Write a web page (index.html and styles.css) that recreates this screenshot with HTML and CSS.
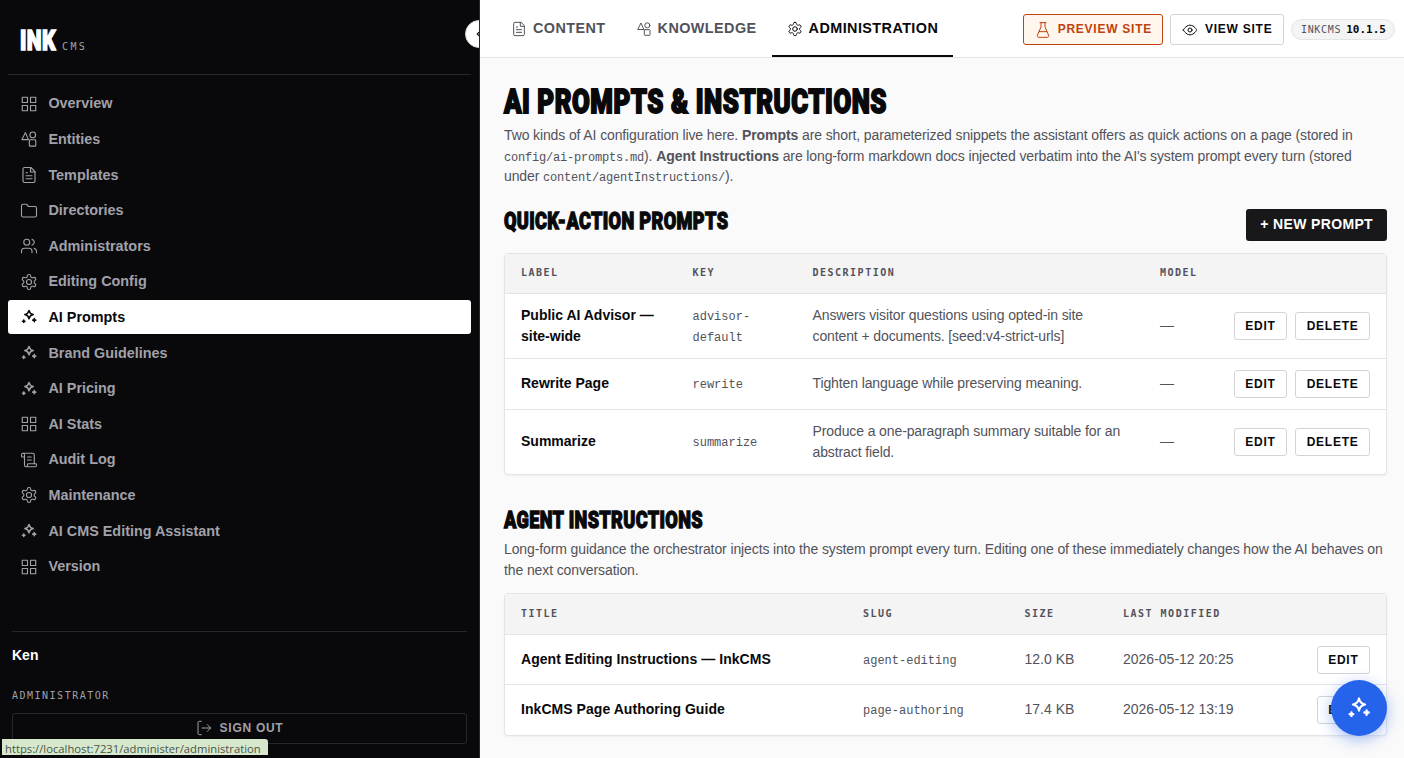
FILE: index.html
```
<!DOCTYPE html>
<html lang="en">

<head>
    <meta charset="utf-8">
    <meta name="viewport" content="width=device-width, initial-scale=1">
    <title>AI Prompts - InkCMS</title>
    <link rel="stylesheet" href="styles.css">
</head>

<body>
    <!-- icon sprite -->
    <svg class="sprite" aria-hidden="true">
        <symbol id="i-grid" viewBox="0 0 24 24"><rect x="3" y="3" width="7" height="7"/><rect x="14" y="3" width="7" height="7"/><rect x="14" y="14" width="7" height="7"/><rect x="3" y="14" width="7" height="7"/></symbol>
        <symbol id="i-shapes" viewBox="0 0 24 24"><path d="M7.2 3.5 2.6 12.8h8.6z"/><circle cx="17" cy="6.5" r="3.8"/><rect x="12.5" y="13" width="8.5" height="8.5" rx="1"/></symbol>
        <symbol id="i-file" viewBox="0 0 24 24"><path d="M14.5 2H6a2 2 0 0 0-2 2v16a2 2 0 0 0 2 2h12a2 2 0 0 0 2-2V7.5z"/><path d="M14 2v6h6M16 13H8M16 17H8M10 9H8"/></symbol>
        <symbol id="i-folder" viewBox="0 0 24 24"><path d="M4 20h16a2 2 0 0 0 2-2V8a2 2 0 0 0-2-2h-7.9a2 2 0 0 1-1.7-.9l-.8-1.2A2 2 0 0 0 7.9 3H4a2 2 0 0 0-2 2v13a2 2 0 0 0 2 2z"/></symbol>
        <symbol id="i-users" viewBox="0 0 24 24"><path d="M16 21v-2a4 4 0 0 0-4-4H6a4 4 0 0 0-4 4v2"/><circle cx="9" cy="7" r="4"/><path d="M22 21v-2a4 4 0 0 0-3-3.87M16 3.13a4 4 0 0 1 0 7.75"/></symbol>
        <symbol id="i-gear" viewBox="0 0 24 24"><path d="M12.22 2h-.44a2 2 0 0 0-2 2v.18a2 2 0 0 1-1 1.73l-.43.25a2 2 0 0 1-2 0l-.15-.08a2 2 0 0 0-2.73.73l-.22.38a2 2 0 0 0 .73 2.73l.15.1a2 2 0 0 1 1 1.72v.51a2 2 0 0 1-1 1.74l-.15.09a2 2 0 0 0-.73 2.73l.22.38a2 2 0 0 0 2.73.73l.15-.08a2 2 0 0 1 2 0l.43.25a2 2 0 0 1 1 1.73V20a2 2 0 0 0 2 2h.44a2 2 0 0 0 2-2v-.18a2 2 0 0 1 1-1.73l.43-.25a2 2 0 0 1 2 0l.15.08a2 2 0 0 0 2.73-.73l.22-.39a2 2 0 0 0-.73-2.73l-.15-.08a2 2 0 0 1-1-1.74v-.5a2 2 0 0 1 1-1.74l.15-.09a2 2 0 0 0 .73-2.73l-.22-.38a2 2 0 0 0-2.73-.73l-.15.08a2 2 0 0 1-2 0l-.43-.25a2 2 0 0 1-1-1.73V4a2 2 0 0 0-2-2z"/><circle cx="12" cy="12" r="3.4"/></symbol>
        <symbol id="i-sparkles" viewBox="0 0 24 24"><path stroke-width="2" d="M12 3.2q.9 4.7 5.6 5.6-4.7.9-5.6 5.6-.9-4.7-5.6-5.6 4.7-.9 5.6-5.6z"/><path stroke-width="2.2" d="M5 16.1v3.2M3.4 17.7h3.2M19 14.2v4M17 16.2h4"/></symbol>
        <symbol id="i-scroll" viewBox="0 0 24 24"><path d="M15 12h-5M15 8h-5M19 17V5a2 2 0 0 0-2-2H4"/><path d="M8 21h12a2 2 0 0 0 2-2v-1a1 1 0 0 0-1-1H11a1 1 0 0 0-1 1v1a2 2 0 1 1-4 0V5a2 2 0 1 0-4 0v2a1 1 0 0 0 1 1h3"/></symbol>
        <symbol id="i-logout" viewBox="0 0 24 24"><path d="M8 22H5a2 2 0 0 1-2-2V4a2 2 0 0 1 2-2h3M17 17l5-5-5-5M22 12H9"/></symbol>
        <symbol id="i-flask" viewBox="0 0 24 24"><path d="M7.5 1h9M9 1v6.5L3.6 19.8A2.2 2.2 0 0 0 5.6 23h12.8a2.2 2.2 0 0 0 2-3.2L15 7.5V1M6.5 14.5h11"/></symbol>
        <symbol id="i-eye" viewBox="0 0 24 24"><path d="M2 12s3.5-7.2 10-7.2S22 12 22 12s-3.5 7.2-10 7.2S2 12 2 12z"/><circle cx="12" cy="12" r="3"/></symbol>
        <symbol id="i-chevron" viewBox="0 0 24 24"><path d="m15 18-6-6 6-6"/></symbol>
    </svg>

    <div class="app">
        <aside class="sidebar">
            <div class="brand">
                <span class="brand-name"><span class="display">INK</span></span>
                <span class="brand-sub">CMS</span>
            </div>
            <nav class="side-nav">
                <a class="side-link"><svg class="icon"><use href="#i-grid"/></svg>Overview</a>
                <a class="side-link"><svg class="icon"><use href="#i-shapes"/></svg>Entities</a>
                <a class="side-link"><svg class="icon"><use href="#i-file"/></svg>Templates</a>
                <a class="side-link"><svg class="icon"><use href="#i-folder"/></svg>Directories</a>
                <a class="side-link"><svg class="icon"><use href="#i-users"/></svg>Administrators</a>
                <a class="side-link"><svg class="icon"><use href="#i-gear"/></svg>Editing Config</a>
                <a class="side-link active" aria-current="page"><svg class="icon"><use href="#i-sparkles"/></svg>AI Prompts</a>
                <a class="side-link"><svg class="icon"><use href="#i-sparkles"/></svg>Brand Guidelines</a>
                <a class="side-link"><svg class="icon"><use href="#i-sparkles"/></svg>AI Pricing</a>
                <a class="side-link"><svg class="icon"><use href="#i-grid"/></svg>AI Stats</a>
                <a class="side-link"><svg class="icon"><use href="#i-scroll"/></svg>Audit Log</a>
                <a class="side-link"><svg class="icon"><use href="#i-gear"/></svg>Maintenance</a>
                <a class="side-link"><svg class="icon"><use href="#i-sparkles"/></svg>AI CMS Editing Assistant</a>
                <a class="side-link"><svg class="icon"><use href="#i-grid"/></svg>Version</a>
            </nav>
            <div class="account">
                <div class="account-name">Ken</div>
                <div class="account-role">Administrator</div>
                <button class="sign-out"><svg class="icon"><use href="#i-logout"/></svg>Sign out</button>
            </div>
            <button class="collapse" aria-label="Collapse sidebar"><svg class="icon"><use href="#i-chevron"/></svg></button>
        </aside>

        <div class="page">
            <header class="topbar">
                <nav class="tabs">
                    <a class="tab"><svg class="icon"><use href="#i-file"/></svg>Content</a>
                    <a class="tab"><svg class="icon"><use href="#i-shapes"/></svg>Knowledge</a>
                    <a class="tab active"><svg class="icon"><use href="#i-gear"/></svg>Administration</a>
                </nav>
                <div class="site-actions">
                    <a class="site-btn preview"><svg class="icon"><use href="#i-flask"/></svg>Preview site</a>
                    <a class="site-btn"><svg class="icon"><use href="#i-eye"/></svg>View site</a>
                    <span class="version">InkCMS <b>10.1.5</b></span>
                </div>
            </header>

            <main class="content">
                <h1><span class="display">AI Prompts &amp; Instructions</span></h1>
                <p class="lead">Two kinds of AI configuration live here. <strong>Prompts</strong> are short, parameterized snippets the assistant offers as quick actions on a page (stored in <code>config/ai-prompts.md</code>). <strong>Agent Instructions</strong> are long-form markdown docs injected verbatim into the AI's system prompt every turn (stored under <code>content/agentInstructions/</code>).</p>

                <div class="section-head">
                    <h2><span class="display">Quick-action prompts</span></h2>
                    <button class="btn-primary">+ New prompt</button>
                </div>
                <table class="prompts">
                    <colgroup><col class="c-label"><col class="c-key"><col class="c-desc"><col class="c-model"><col></colgroup>
                    <thead>
                        <tr><th>Label</th><th>Key</th><th>Description</th><th>Model</th><th></th></tr>
                    </thead>
                    <tbody>
                        <tr>
                            <td class="name">Public AI Advisor — site-wide</td>
                            <td><code>advisor-default</code></td>
                            <td class="desc">Answers visitor questions using opted-in site content + documents. [seed:v4-strict-urls]</td>
                            <td>—</td>
                            <td><div class="actions"><button class="btn">Edit</button><button class="btn">Delete</button></div></td>
                        </tr>
                        <tr>
                            <td class="name">Rewrite Page</td>
                            <td><code>rewrite</code></td>
                            <td class="desc">Tighten language while preserving meaning.</td>
                            <td>—</td>
                            <td><div class="actions"><button class="btn">Edit</button><button class="btn">Delete</button></div></td>
                        </tr>
                        <tr>
                            <td class="name">Summarize</td>
                            <td><code>summarize</code></td>
                            <td class="desc">Produce a one-paragraph summary suitable for an abstract field.</td>
                            <td>—</td>
                            <td><div class="actions"><button class="btn">Edit</button><button class="btn">Delete</button></div></td>
                        </tr>
                    </tbody>
                </table>

                <h2 class="agent-title"><span class="display">Agent instructions</span></h2>
                <p class="intro">Long-form guidance the orchestrator injects into the system prompt every turn. Editing one of these immediately changes how the AI behaves on the next conversation.</p>
                <table class="agents">
                    <colgroup><col class="c-title"><col class="c-slug"><col class="c-size"><col class="c-date"><col></colgroup>
                    <thead>
                        <tr><th>Title</th><th>Slug</th><th>Size</th><th>Last modified</th><th></th></tr>
                    </thead>
                    <tbody>
                        <tr>
                            <td class="name">Agent Editing Instructions — InkCMS</td>
                            <td><code>agent-editing</code></td>
                            <td>12.0 KB</td>
                            <td>2026-05-12 20:25</td>
                            <td><div class="actions"><button class="btn">Edit</button></div></td>
                        </tr>
                        <tr>
                            <td class="name">InkCMS Page Authoring Guide</td>
                            <td><code>page-authoring</code></td>
                            <td>17.4 KB</td>
                            <td>2026-05-12 13:19</td>
                            <td><div class="actions"><button class="btn">Edit</button></div></td>
                        </tr>
                    </tbody>
                </table>
            </main>
        </div>
    </div>

    <button class="fab" aria-label="Open AI assistant"><svg class="icon"><use href="#i-sparkles"/></svg></button>
    <div class="link-status">https://localhost:7231/administer/administration</div>
</body>

</html>
```
FILE: styles.css
```
:root {
    --ink: #09090b;
    --text: #52525b;
    --muted: #a1a1aa;
    --line: #e4e4e7;
    --line-strong: #d4d4d8;
    --line-dark: #27272a;
    --surface: #fafafa;
    --accent: #2563eb;
    --preview: #c2410c;
    --sans: "Liberation Sans", Arial, sans-serif;
    --mono: "Liberation Mono", Consolas, monospace;
    --mono-caps: "DejaVu Sans Mono", Consolas, monospace;
}

* {
    box-sizing: border-box;
    margin: 0;
    padding: 0;
}

body {
    height: 100vh;
    overflow: hidden;
    background: var(--surface);
    color: var(--text);
    font: 14px/21px var(--sans);
}

button {
    font-family: inherit;
    cursor: pointer;
}

.sprite {
    display: none;
}

.icon {
    width: 16px;
    height: 16px;
    flex: none;
    fill: none;
    stroke: currentColor;
    stroke-width: 1.5;
    stroke-linecap: round;
    stroke-linejoin: round;
}

.app {
    display: flex;
    height: 100vh;
}

/* heavy condensed face for the logo and headings */
.display {
    display: inline-block;
    font-family: Impact, Roboto, sans-serif;
    font-weight: 900;
    letter-spacing: 0.02em;
    text-transform: uppercase;
    white-space: nowrap;
    transform-origin: 0 50%;
    transform: scaleX(0.755);
    -webkit-text-stroke: 0.055em currentColor;
}

/* sidebar */
.sidebar {
    position: relative;
    display: flex;
    flex-direction: column;
    flex: none;
    width: 480px;
    padding: 0 8px;
    overflow: hidden;
    background: var(--ink);
    border-right: 1px solid var(--line-dark);
}

.brand {
    display: flex;
    align-items: baseline;
    height: 75px;
    padding: 24px 12px 0;
    border-bottom: 1px solid var(--line-dark);
}

.brand-name {
    width: 42px;
    color: #fff;
    font-size: 28px;
    line-height: 34px;
}

.brand-sub {
    color: var(--muted);
    font: 10px var(--mono-caps);
    letter-spacing: 2.4px;
}

.side-nav {
    display: flex;
    flex-direction: column;
    gap: 1.6px;
    padding-top: 11.9px;
}

.side-link {
    display: flex;
    align-items: center;
    gap: 10.4px;
    height: 34px;
    padding: 0 12px;
    border-radius: 3px;
    color: var(--muted);
    font-size: 14.4px;
    font-weight: 600;
}

.side-link .icon {
    width: 18px;
    height: 18px;
}

.side-link.active {
    background: #fff;
    color: var(--ink);
}

.account {
    margin: auto 4px 14px;
    padding-top: 13px;
    border-top: 1px solid var(--line-dark);
}

.account-name {
    color: #fff;
    font-weight: 700;
}

.account-role {
    margin: 22px 0 10px;
    color: var(--muted);
    font: 10px/15px var(--mono-caps);
    letter-spacing: 1.5px;
    text-transform: uppercase;
}

.sign-out {
    display: flex;
    align-items: center;
    justify-content: center;
    gap: 8px;
    width: 100%;
    height: 31px;
    padding-bottom: 1px;
    background: none;
    border: 1px solid var(--line-dark);
    border-radius: 3px;
    color: var(--muted);
    font-size: 12px;
    font-weight: 600;
    letter-spacing: 0.72px;
    text-transform: uppercase;
}

.collapse {
    position: absolute;
    top: 20px;
    right: -14px;
    display: grid;
    place-items: center;
    width: 28px;
    height: 28px;
    background: #fff;
    border: 1px solid var(--line-strong);
    border-radius: 50%;
    color: var(--ink);
}

.collapse .icon {
    width: 14px;
    height: 14px;
    stroke-width: 2;
}

/* top bar */
.page {
    flex: 1;
    min-width: 0;
}

.topbar {
    display: flex;
    justify-content: space-between;
    height: 58px;
    padding: 0 9px 0 16px;
    background: #fff;
    border-bottom: 1px solid var(--line);
}

.tabs {
    display: flex;
}

.tab {
    display: flex;
    align-items: center;
    gap: 6px;
    height: 57px;
    padding: 2px 15px 0;
    border-bottom: 2px solid transparent;
    font-size: 14.4px;
    font-weight: 600;
    letter-spacing: 0.43px;
    text-transform: uppercase;
}

.tab.active {
    border-color: var(--ink);
    color: var(--ink);
}

.site-actions {
    display: flex;
    align-items: center;
    gap: 7px;
    padding-top: 2px;
}

.site-btn {
    display: flex;
    align-items: center;
    gap: 7px;
    height: 31px;
    padding: 0 10.5px;
    border: 1px solid var(--line-strong);
    border-radius: 3px;
    color: var(--ink);
    font-size: 12px;
    font-weight: 600;
    letter-spacing: 0.75px;
    text-transform: uppercase;
}

.site-btn.preview {
    background: #fff7ed;
    border-color: var(--preview);
    color: var(--preview);
}

.version {
    display: flex;
    gap: 5px;
    height: 21px;
    padding: 0 8px 0 9px;
    background: #f4f4f5;
    border: 1px solid var(--line);
    border-radius: 11px;
    font: 10px/19px var(--mono-caps);
    letter-spacing: 0.7px;
    text-transform: uppercase;
}

.version b {
    color: var(--ink);
    font-size: 11px;
    letter-spacing: 0;
}

/* page content */
.content {
    padding: 26px 17px 0 24px;
}

h1,
h2 {
    color: var(--ink);
}

h1 {
    height: 36px;
    font-size: 33.5px;
    line-height: 36px;
}

h1 .display {
    transform: scaleX(0.77);
}

h2 {
    height: 24px;
    font-size: 24px;
    line-height: 24px;
}

.lead {
    margin-top: 5px;
    line-height: 20.6px;
    letter-spacing: -0.12px;
}

.lead strong {
    letter-spacing: -0.05px;
}

code {
    font: 12px/1 var(--mono);
}

.lead code {
    letter-spacing: -0.2px;
}

.section-head {
    display: flex;
    justify-content: space-between;
    margin: 22px 0 12px;
}

.btn-primary {
    height: 32px;
    padding: 0 14px 2px;
    background: #18181b;
    border: 0;
    border-radius: 3px;
    color: #fff;
    font-size: 14px;
    font-weight: 700;
    letter-spacing: 0.35px;
    text-transform: uppercase;
}

table {
    width: 100%;
    table-layout: fixed;
    border: 1px solid var(--line);
    border-radius: 4px;
    border-spacing: 0;
    background: #fff;
    box-shadow: 0 1px 2px rgba(0, 0, 0, 0.05);
}

th,
td {
    padding: 0 16px;
    text-align: left;
    vertical-align: middle;
}

th {
    height: 40px;
    padding-bottom: 1px;
    background: #f4f4f5;
    border-bottom: 1px solid var(--line);
    font: 700 10px/15px var(--mono-caps);
    letter-spacing: 1.5px;
    text-transform: uppercase;
    white-space: nowrap;
}

td {
    padding-top: 11px;
    padding-bottom: 11px;
    border-bottom: 1px solid var(--line);
}

tr:last-child td {
    border-bottom: 0;
}

.agents th {
    height: 41px;
}

.agents tr:first-child td {
    padding-bottom: 10px;
}

td .actions {
    display: flex;
    justify-content: flex-end;
    gap: 8px;
}

td:last-child {
    padding-left: 0;
}

.name {
    color: var(--ink);
    font-weight: 700;
}

.desc {
    letter-spacing: -0.11px;
}

.agents .name {
    letter-spacing: 0.05px;
}

.c-label { width: 171.5px; }
.c-key { width: 120px; }
.c-desc { width: 347.5px; }
.c-model { width: 74px; }
.c-title { width: 342px; }
.c-slug { width: 161.5px; }
.c-size { width: 98.5px; }
.c-date { width: 160px; }

.btn {
    height: 28px;
    padding: 0 10.5px;
    background: #fff;
    border: 1px solid var(--line-strong);
    border-radius: 3px;
    color: var(--ink);
    font-size: 12px;
    font-weight: 600;
    letter-spacing: 0.75px;
    text-transform: uppercase;
}

.agent-title {
    margin-top: 33px;
}

.intro {
    margin: 7px 0 12px;
    letter-spacing: -0.11px;
}

/* floating assistant button */
.fab {
    position: fixed;
    right: 17px;
    bottom: 22px;
    display: grid;
    place-items: center;
    width: 56px;
    height: 56px;
    background: var(--accent);
    border: 0;
    border-radius: 50%;
    box-shadow: 0 4px 16px rgba(37, 99, 235, 0.4);
    color: #fff;
}

.fab .icon {
    width: 26px;
    height: 26px;
}

/* link target shown on hover */
.link-status {
    position: fixed;
    left: 2px;
    bottom: 3px;
    width: 266px;
    height: 16px;
    padding-left: 3px;
    overflow: hidden;
    background: #d7e8cd;
    border-radius: 0 3px 0 0;
    color: #4a5548;
    font: 11.25px/19px "Open Sans", sans-serif;
    white-space: nowrap;
}
```
